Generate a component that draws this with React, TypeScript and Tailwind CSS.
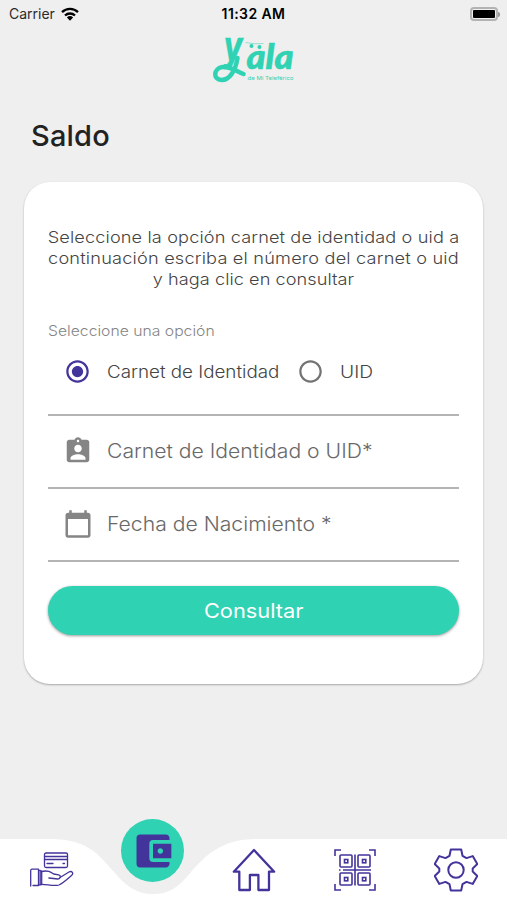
import type { ReactNode } from 'react';
import {
  MdAccountBalanceWallet,
  MdAssignmentInd,
  MdCalendarToday,
  MdRadioButtonChecked,
  MdRadioButtonUnchecked,
} from 'react-icons/md';

function StatusBar() {
  return (
    <div className="grid h-7 grid-cols-3 items-center px-[9px] text-black">
      <div className="flex items-center gap-[6px]">
        <span className="text-[14px] leading-none text-[#2b2b2b]">Carrier</span>
        <svg width="18" height="14" viewBox="0 0 18 14" fill="none" stroke="currentColor" strokeWidth="2.3">
          <path d="M1 5.2a11.5 11.5 0 0 1 16 0" />
          <path d="M4 8.5a7.2 7.2 0 0 1 10 0" />
          <path d="M9 13.7 5.9 10.5a4.6 4.6 0 0 1 6.2 0z" fill="currentColor" stroke="none" />
        </svg>
      </div>
      <span className="text-center text-[14px] leading-none font-semibold tracking-[0.4px]">11:32 AM</span>
      <div className="-mr-[2px] flex items-center justify-end">
        <div className="h-[14px] w-[28px] rounded-[4px] border-2 border-[#b3b3b3] p-[1px]">
          <div className="h-full w-full rounded-[1px] bg-black" />
        </div>
        <div className="h-[5px] w-[2px] rounded-r-full bg-[#9a9a9a]" />
      </div>
    </div>
  );
}

function Logo() {
  return (
    <svg width="90" height="64" viewBox="209.5 22 90 64" className="block" fill="#2fd2b2">
      <g fontWeight="900" fontStyle="italic" stroke="#2fd2b2" strokeWidth=".6">
        <text x="224" y="60" fontSize="40" fontFamily="DejaVu Sans" textLength="19" lengthAdjust="spacingAndGlyphs">
          y
        </text>
        <text x="247" y="69" fontSize="34" fontFamily="Lato" textLength="47" lengthAdjust="spacingAndGlyphs">
          ala
        </text>
      </g>
      {/* tail of the y */}
      <path
        d="M238 58c-2 13-8 22-16 22-9 0-8-12 1-13 8-1 13 4 21 7"
        fill="none"
        stroke="#2fd2b2"
        strokeWidth="4.5"
        strokeLinecap="round"
      />
      <path d="M246 42.5q9 2 18 1" fill="none" stroke="#2fd2b2" strokeWidth=".5" />
      <circle cx="252" cy="46" r="2" />
      <circle cx="260" cy="47" r="2" />
      <text x="248" y="80" fontSize="5" fontFamily="Inter" textLength="46" lengthAdjust="spacingAndGlyphs">
        de Mi Teleférico
      </text>
    </svg>
  );
}

function Field({ icon, label }: { icon: ReactNode; label: string }) {
  return (
    <div className="flex h-[73.3px] items-center border-b-2 border-[#b4b4b4] pl-[15px] text-[#858585]">
      {icon}
      <span className="mt-[1px] ml-[14px] origin-left scale-x-[1.085] text-[19.5px] font-light whitespace-nowrap text-[#696969]">
        {label}
      </span>
    </div>
  );
}

function HandCardIcon() {
  return (
    <svg
      width="44"
      height="36"
      viewBox="0 0 44 36"
      fill="none"
      stroke="#43349b"
      strokeWidth="1.3"
      strokeLinejoin="round"
      strokeLinecap="round"
    >
      <rect x="14.5" y="1" width="23" height="14.5" rx="1.5" />
      <path d="M14.5 4.5h23M14.5 7.5h23M17 11.5h6M33 11.5h1.5" />
      <path d="M.7 34V18.5c0-.8.5-1.3 1.3-1.3h6.5V33.5H3M8.5 18l3.2 1v13.5l-3.2.5M10.2 18.5v14.3" />
      <path d="M11.7 19.5c6-1.5 9 .5 12 2.5l5 .8c2.5.7 2 4.2-.8 4.2l-9-1" />
      <path d="M30 25.5l9-5.5c3-1.6 5 1.3 2.5 3.5-4 3.5-9 8-12.5 9.500-5 1.500-11-.5-17.300-.7" />
    </svg>
  );
}

function HomeIcon() {
  return (
    <svg width="44" height="44" viewBox="0 0 44 44" fill="none" stroke="#43349b" strokeWidth="2.3">
      <path d="M22 2 1.8 23.7h5.5v18.3h10.6V27h8.5v15h10.6V23.7h5.2z" strokeLinejoin="round" />
    </svg>
  );
}

function QrIcon() {
  return (
    <svg width="42" height="42" viewBox="0 0 42 42" fill="none" stroke="#43349b" strokeWidth="1.6">
      <path d="M1 7V1h6M35 1h6v6M41 35v6h-6M7 41H1v-6" />
      <path d="M21 5.5v31M9 21h28M5 21h1.5" />
      <rect x="6" y="6" width="12" height="12" rx="1" />
      <rect x="24" y="6" width="12" height="12" rx="1" />
      <rect x="6" y="24" width="12" height="12" rx="1" />
      <rect x="24" y="24" width="12" height="12" rx="1" />
      <rect x="10.5" y="10.5" width="3.3" height="3.3" />
      <rect x="28.5" y="10.5" width="3.3" height="3.3" />
      <rect x="10.5" y="28.5" width="3.3" height="3.3" />
      <rect x="28.5" y="28.5" width="3.3" height="3.3" />
    </svg>
  );
}

function GearIcon() {
  return (
    <svg
      width="44"
      height="44"
      viewBox="0 0 44 44"
      fill="none"
      stroke="#43349b"
      strokeWidth="2"
      strokeLinejoin="round"
    >
      <path d="M16.8 1.5h10.4l1.3 6.3 4 2.3 6.2-2 4.6 8-4.6 4.3v3.2l4.6 4.3-4.6 8-6.2-2-4 2.3-1.3 6.3H16.8l-1.3-6.3-4-2.3-6.2 2-4.6-8 4.6-4.3v-3.2L.7 16.1l4.6-8 6.2 2 4-2.3z" />
      <circle cx="22" cy="22" r="7.7" />
    </svg>
  );
}

function BottomNav() {
  return (
    <nav className="relative h-[82px]">
      <svg className="absolute bottom-0 left-0" width="507" height="61" viewBox="0 839 507 61" fill="#fff">
        <path d="M0 839H50C90 839 100 857 115 873C127 887 137 894 153 894C169 894 179 887 191 872C206 855 222 839 256 839H507V900H0Z" />
      </svg>
      <div className="relative grid h-full grid-cols-5 justify-items-center pl-[1px]">
        <div className="mt-[34px]"><HandCardIcon /></div>
        <div className="mt-[1px] flex size-[63px] items-center justify-center rounded-full bg-[#2fd2b2]">
          <MdAccountBalanceWallet size={44} className="text-[#43349b]" />
        </div>
        <div className="mt-[30px]"><HomeIcon /></div>
        <div className="mt-[31px]"><QrIcon /></div>
        <div className="mt-[30px]"><GearIcon /></div>
      </div>
    </nav>
  );
}

export default function App() {
  return (
    <div className="flex h-[900px] w-[507px] flex-col overflow-hidden bg-[#efefef] font-['Inter',sans-serif]">
      <StatusBar />
      <header className="-mt-[6px] flex justify-center">
        <Logo />
      </header>
      <h1 className="mt-[30px] pl-[31px] text-[29px] leading-[40px] font-medium tracking-[0.2px] text-[#222]">Saldo</h1>

      <main className="mx-6 mt-[26px] h-[502px] rounded-[26px] bg-white px-6 pt-[45px] shadow-[0_1px_2px_rgba(0,0,0,0.3)]">
        <p className="scale-x-[1.1] text-center text-[16.5px] leading-[21px] font-[350] whitespace-nowrap text-[#444]">
          <span className="-mx-6 block tracking-[0.12px]">Seleccione la opción carnet de identidad o uid a</span>
          <span className="-mx-6 block tracking-[0.18px]">continuación escriba el número del carnet o uid</span>
          <span className="-mx-6 block tracking-[0.04px]">y haga clic en consultar</span>
        </p>
        <div className="mt-[31px] origin-left scale-x-[1.085] text-[14.5px] leading-5 font-[350] text-[#858585]">
          Seleccione una opción
        </div>
        <div className="flex h-[74.5px] items-start border-b-2 border-[#b4b4b4] pt-[16px] pl-4 text-[17px] font-[350] text-[#444]">
          <div className="flex h-7 items-center">
            <MdRadioButtonChecked size={27} className="text-[#43349b]" />
            <span className="mt-[3px] ml-4 w-[176px] origin-left scale-x-[1.105]">Carnet de Identidad</span>
          </div>
          <div className="ml-[14px] flex h-7 items-center">
            <MdRadioButtonUnchecked size={27} className="text-[#737373]" />
            <span className="mt-[3px] ml-4 origin-left scale-x-[1.13]">UID</span>
          </div>
        </div>
        <Field icon={<MdAssignmentInd size={30} />} label="Carnet de Identidad o UID*" />
        <Field icon={<MdCalendarToday size={30} />} label="Fecha de Nacimiento *" />
        <button className="mt-6 h-[49px] w-full rounded-full bg-[#2fd2b2] text-[20px] text-white shadow-[0_1px_3px_rgba(0,0,0,0.4)]">
          <span className="inline-block scale-x-[1.09]">Consultar</span>
        </button>
      </main>

      <div className="mt-auto">
        <BottomNav />
      </div>
    </div>
  );
}
